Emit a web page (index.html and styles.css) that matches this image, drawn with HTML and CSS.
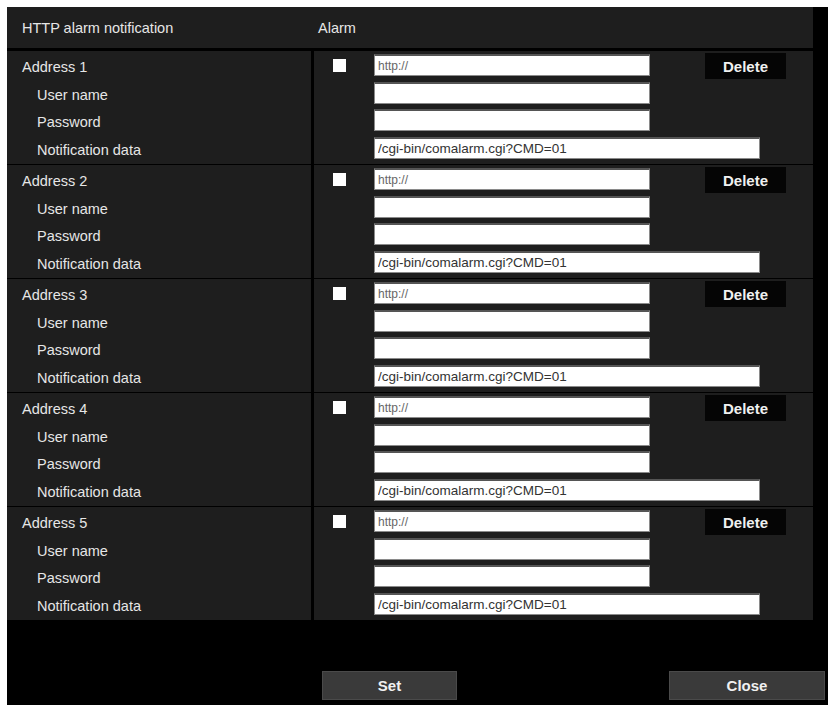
FILE: index.html
```html
<!DOCTYPE html>
<html lang="en">
<head>
  <meta charset="UTF-8" />
  <title>HTTP alarm notification</title>
  <link rel="stylesheet" href="styles.css">
</head>
<body>
  <div class="panel">
    <!-- Header -->
    <div class="head">
      <div class="head-title">HTTP alarm notification</div>
      <div class="head-alarm">Alarm</div>
    </div>

    <div class="block">
      <div class="labels">
        <div class="lbl main">Address 1</div>
        <div class="lbl">User name</div>
        <div class="lbl">Password</div>
        <div class="lbl">Notification data</div>
      </div>
      <div class="fields">
        <div class="row">
          <input type="checkbox" class="chk" />
          <input type="text" class="txt url" value="http://" />
          <button class="del">Delete</button>
        </div>
        <div class="row"><input type="text" class="txt" /></div>
        <div class="row"><input type="password" class="txt" /></div>
        <div class="row"><input type="text" class="txt wide" value="/cgi-bin/comalarm.cgi?CMD=01" /></div>
      </div>
    </div>

    <div class="block">
      <div class="labels">
        <div class="lbl main">Address 2</div>
        <div class="lbl">User name</div>
        <div class="lbl">Password</div>
        <div class="lbl">Notification data</div>
      </div>
      <div class="fields">
        <div class="row">
          <input type="checkbox" class="chk" />
          <input type="text" class="txt url" value="http://" />
          <button class="del">Delete</button>
        </div>
        <div class="row"><input type="text" class="txt" /></div>
        <div class="row"><input type="password" class="txt" /></div>
        <div class="row"><input type="text" class="txt wide" value="/cgi-bin/comalarm.cgi?CMD=01" /></div>
      </div>
    </div>

    <div class="block">
      <div class="labels">
        <div class="lbl main">Address 3</div>
        <div class="lbl">User name</div>
        <div class="lbl">Password</div>
        <div class="lbl">Notification data</div>
      </div>
      <div class="fields">
        <div class="row">
          <input type="checkbox" class="chk" />
          <input type="text" class="txt url" value="http://" />
          <button class="del">Delete</button>
        </div>
        <div class="row"><input type="text" class="txt" /></div>
        <div class="row"><input type="password" class="txt" /></div>
        <div class="row"><input type="text" class="txt wide" value="/cgi-bin/comalarm.cgi?CMD=01" /></div>
      </div>
    </div>

    <div class="block">
      <div class="labels">
        <div class="lbl main">Address 4</div>
        <div class="lbl">User name</div>
        <div class="lbl">Password</div>
        <div class="lbl">Notification data</div>
      </div>
      <div class="fields">
        <div class="row">
          <input type="checkbox" class="chk" />
          <input type="text" class="txt url" value="http://" />
          <button class="del">Delete</button>
        </div>
        <div class="row"><input type="text" class="txt" /></div>
        <div class="row"><input type="password" class="txt" /></div>
        <div class="row"><input type="text" class="txt wide" value="/cgi-bin/comalarm.cgi?CMD=01" /></div>
      </div>
    </div>

    <div class="block">
      <div class="labels">
        <div class="lbl main">Address 5</div>
        <div class="lbl">User name</div>
        <div class="lbl">Password</div>
        <div class="lbl">Notification data</div>
      </div>
      <div class="fields">
        <div class="row">
          <input type="checkbox" class="chk" />
          <input type="text" class="txt url" value="http://" />
          <button class="del">Delete</button>
        </div>
        <div class="row"><input type="text" class="txt" /></div>
        <div class="row"><input type="password" class="txt" /></div>
        <div class="row"><input type="text" class="txt wide" value="/cgi-bin/comalarm.cgi?CMD=01" /></div>
      </div>
    </div>

    <!-- Footer buttons -->
    <div class="foot">
      <button class="btn set">Set</button>
      <button class="btn close">Close</button>
    </div>
  </div>
</body>
</html>
```

FILE: styles.css
```css
body {
  margin: 0;
  background: #fff;
  font-family: 'Liberation Sans', Arial, sans-serif;
}

.panel {
  margin: 7px 0 0 7px;
  width: 821px;
  height: 698px;
  background: #000;
  display: flex;
  flex-direction: column;
}

.head {
  width: 806px;
  height: 41px;
  background: #1e1e1e;
  display: flex;
  align-items: center;
  color: #e6e6e6;
  font-size: 14.5px;
  margin-bottom: 3px;
}

.head-title {
  width: 296px;
  padding-left: 15px;
}

.block {
  width: 806px;
  height: 111px;
  display: grid;
  grid-template-columns: 304px 499px;
  column-gap: 3px;
  margin-bottom: 3px;
}

.labels,
.fields {
  background: #1e1e1e;
  padding-top: 3px;
}

.lbl {
  height: 27.5px;
  line-height: 27px;
  color: #e6e6e6;
  font-size: 14.5px;
  padding-left: 30px;
}

.lbl.main {
  padding-left: 15px;
}

.row {
  height: 27.5px;
  display: flex;
  align-items: flex-start;
  padding-left: 60px;
}

.row:first-child {
  padding-left: 19px;
}

.chk {
  appearance: none;
  -webkit-appearance: none;
  width: 13px;
  height: 13px;
  margin: 5px 28px 0 0;
  background: #fff;
  border: none;
  border-radius: 0;
}

.txt {
  box-sizing: border-box;
  width: 276px;
  height: 22px;
  margin: 0;
  padding: 0 3px;
  border: 1px solid #8a8a8a;
  border-top: 2px solid #555;
  background: #fff;
  font-family: 'Liberation Sans', Arial, sans-serif;
  font-size: 13.5px;
  color: #333;
  outline: none;
}

.txt.url {
  color: #666;
  font-size: 12px;
}

.txt.wide {
  width: 386px;
}

.del {
  margin: -1px 0 0 55px;
  width: 81px;
  height: 26px;
  background: #050505;
  border: none;
  color: #f0f0f0;
  font-family: 'Liberation Sans', Arial, sans-serif;
  font-size: 15px;
  font-weight: bold;
}

.foot {
  margin-top: auto;
  display: flex;
  padding-bottom: 5px;
}

.btn {
  height: 29px;
  background: #3a3a3a;
  border: 1px solid #4a4a4a;
  color: #f0f0f0;
  font-family: 'Liberation Sans', Arial, sans-serif;
  font-size: 15px;
  font-weight: bold;
}

.btn.set {
  width: 135px;
  margin-left: 315px;
}

.btn.close {
  width: 156px;
  margin-left: auto;
  margin-right: 3px;
}
```
